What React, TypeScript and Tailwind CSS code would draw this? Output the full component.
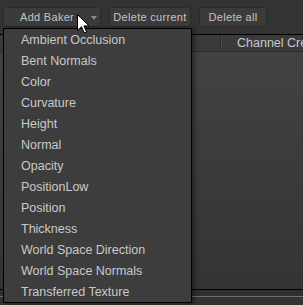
import React from "react";

const bakers = [
  "Ambient Occlusion",
  "Bent Normals",
  "Color",
  "Curvature",
  "Height",
  "Normal",
  "Opacity",
  "PositionLow",
  "Position",
  "Thickness",
  "World Space Direction",
  "World Space Normals",
  "Transferred Texture",
];

function ToolButton({ children, className }: { children: React.ReactNode; className?: string }) {
  return (
    <button
      className={`h-[20px] shrink-0 rounded-[3px] border border-[#2b2b2b] bg-[#3b3b3b] text-[11px] tracking-[0.3px] text-[#c4c4c4] ${className ?? ""}`}
    >
      {children}
    </button>
  );
}

export default function App() {
  return (
    <div
      className="relative w-[303px] h-[305px] overflow-hidden bg-[#333333]"
      style={{ fontFamily: '"Liberation Sans", Arial, sans-serif' }}
    >
      {/* toolbar */}
      <div className="flex gap-[8px] pl-[3px] pt-[7px] h-[34px]">
        <ToolButton className="relative w-[98px] pl-[16px] text-left">
          Add Baker
          <span className="absolute right-[3px] top-[8px] w-0 h-0 border-l-[3px] border-r-[3px] border-t-[4px] border-l-transparent border-r-transparent border-t-[#8a8a8a]" />
        </ToolButton>
        <ToolButton className="w-[82px]">Delete current</ToolButton>
        <ToolButton className="w-[68px]">Delete all</ToolButton>
      </div>

      {/* table header */}
      <div className="flex h-[18px] border-t border-black bg-[#3a3a3a] border-b border-b-[#2c2c2c]">
        <div className="w-[221px] shrink-0 border-r border-[#2a2a2a] shadow-[1px_0_0_#4a4a4a]" />
        <div className="pl-[16px] text-[12.5px] leading-[17px] text-[#c8c8c8] whitespace-nowrap">
          Channel Creation
        </div>
      </div>

      {/* table body */}
      <div className="h-[238px] bg-gradient-to-b from-[#424242] to-[#343434] border-b border-black" />
      <div className="h-[6px] bg-[#303030]" />
      <div className="h-[1px] bg-[#6e6e6e]" />
      <div className="h-[8px] bg-[#333333]" />

      {/* dropdown menu */}
      <div className="absolute left-[3px] top-[28px] w-[189px] border border-black bg-[#3d3d3d] shadow-[3px_0_4px_rgba(0,0,0,0.35)]">
        {bakers.map((b) => (
          <div
            key={b}
            className="h-[21px] pl-[17px] pt-[1px] text-[12.5px] leading-[21px] text-[#c9c9c9] whitespace-nowrap"
          >
            {b}
          </div>
        ))}
      </div>

      {/* mouse cursor */}
      <svg className="absolute left-[77px] top-[14px]" width="13" height="20" viewBox="0 0 13 20">
        <path
          d="M0.5 0.5 L0.5 16.5 L4.5 12.8 L7.3 19 L9.6 18 L6.9 11.9 L12 11.9 Z"
          fill="#ffffff"
          stroke="#000000"
          strokeWidth="1"
          strokeLinejoin="round"
        />
      </svg>
    </div>
  );
}
